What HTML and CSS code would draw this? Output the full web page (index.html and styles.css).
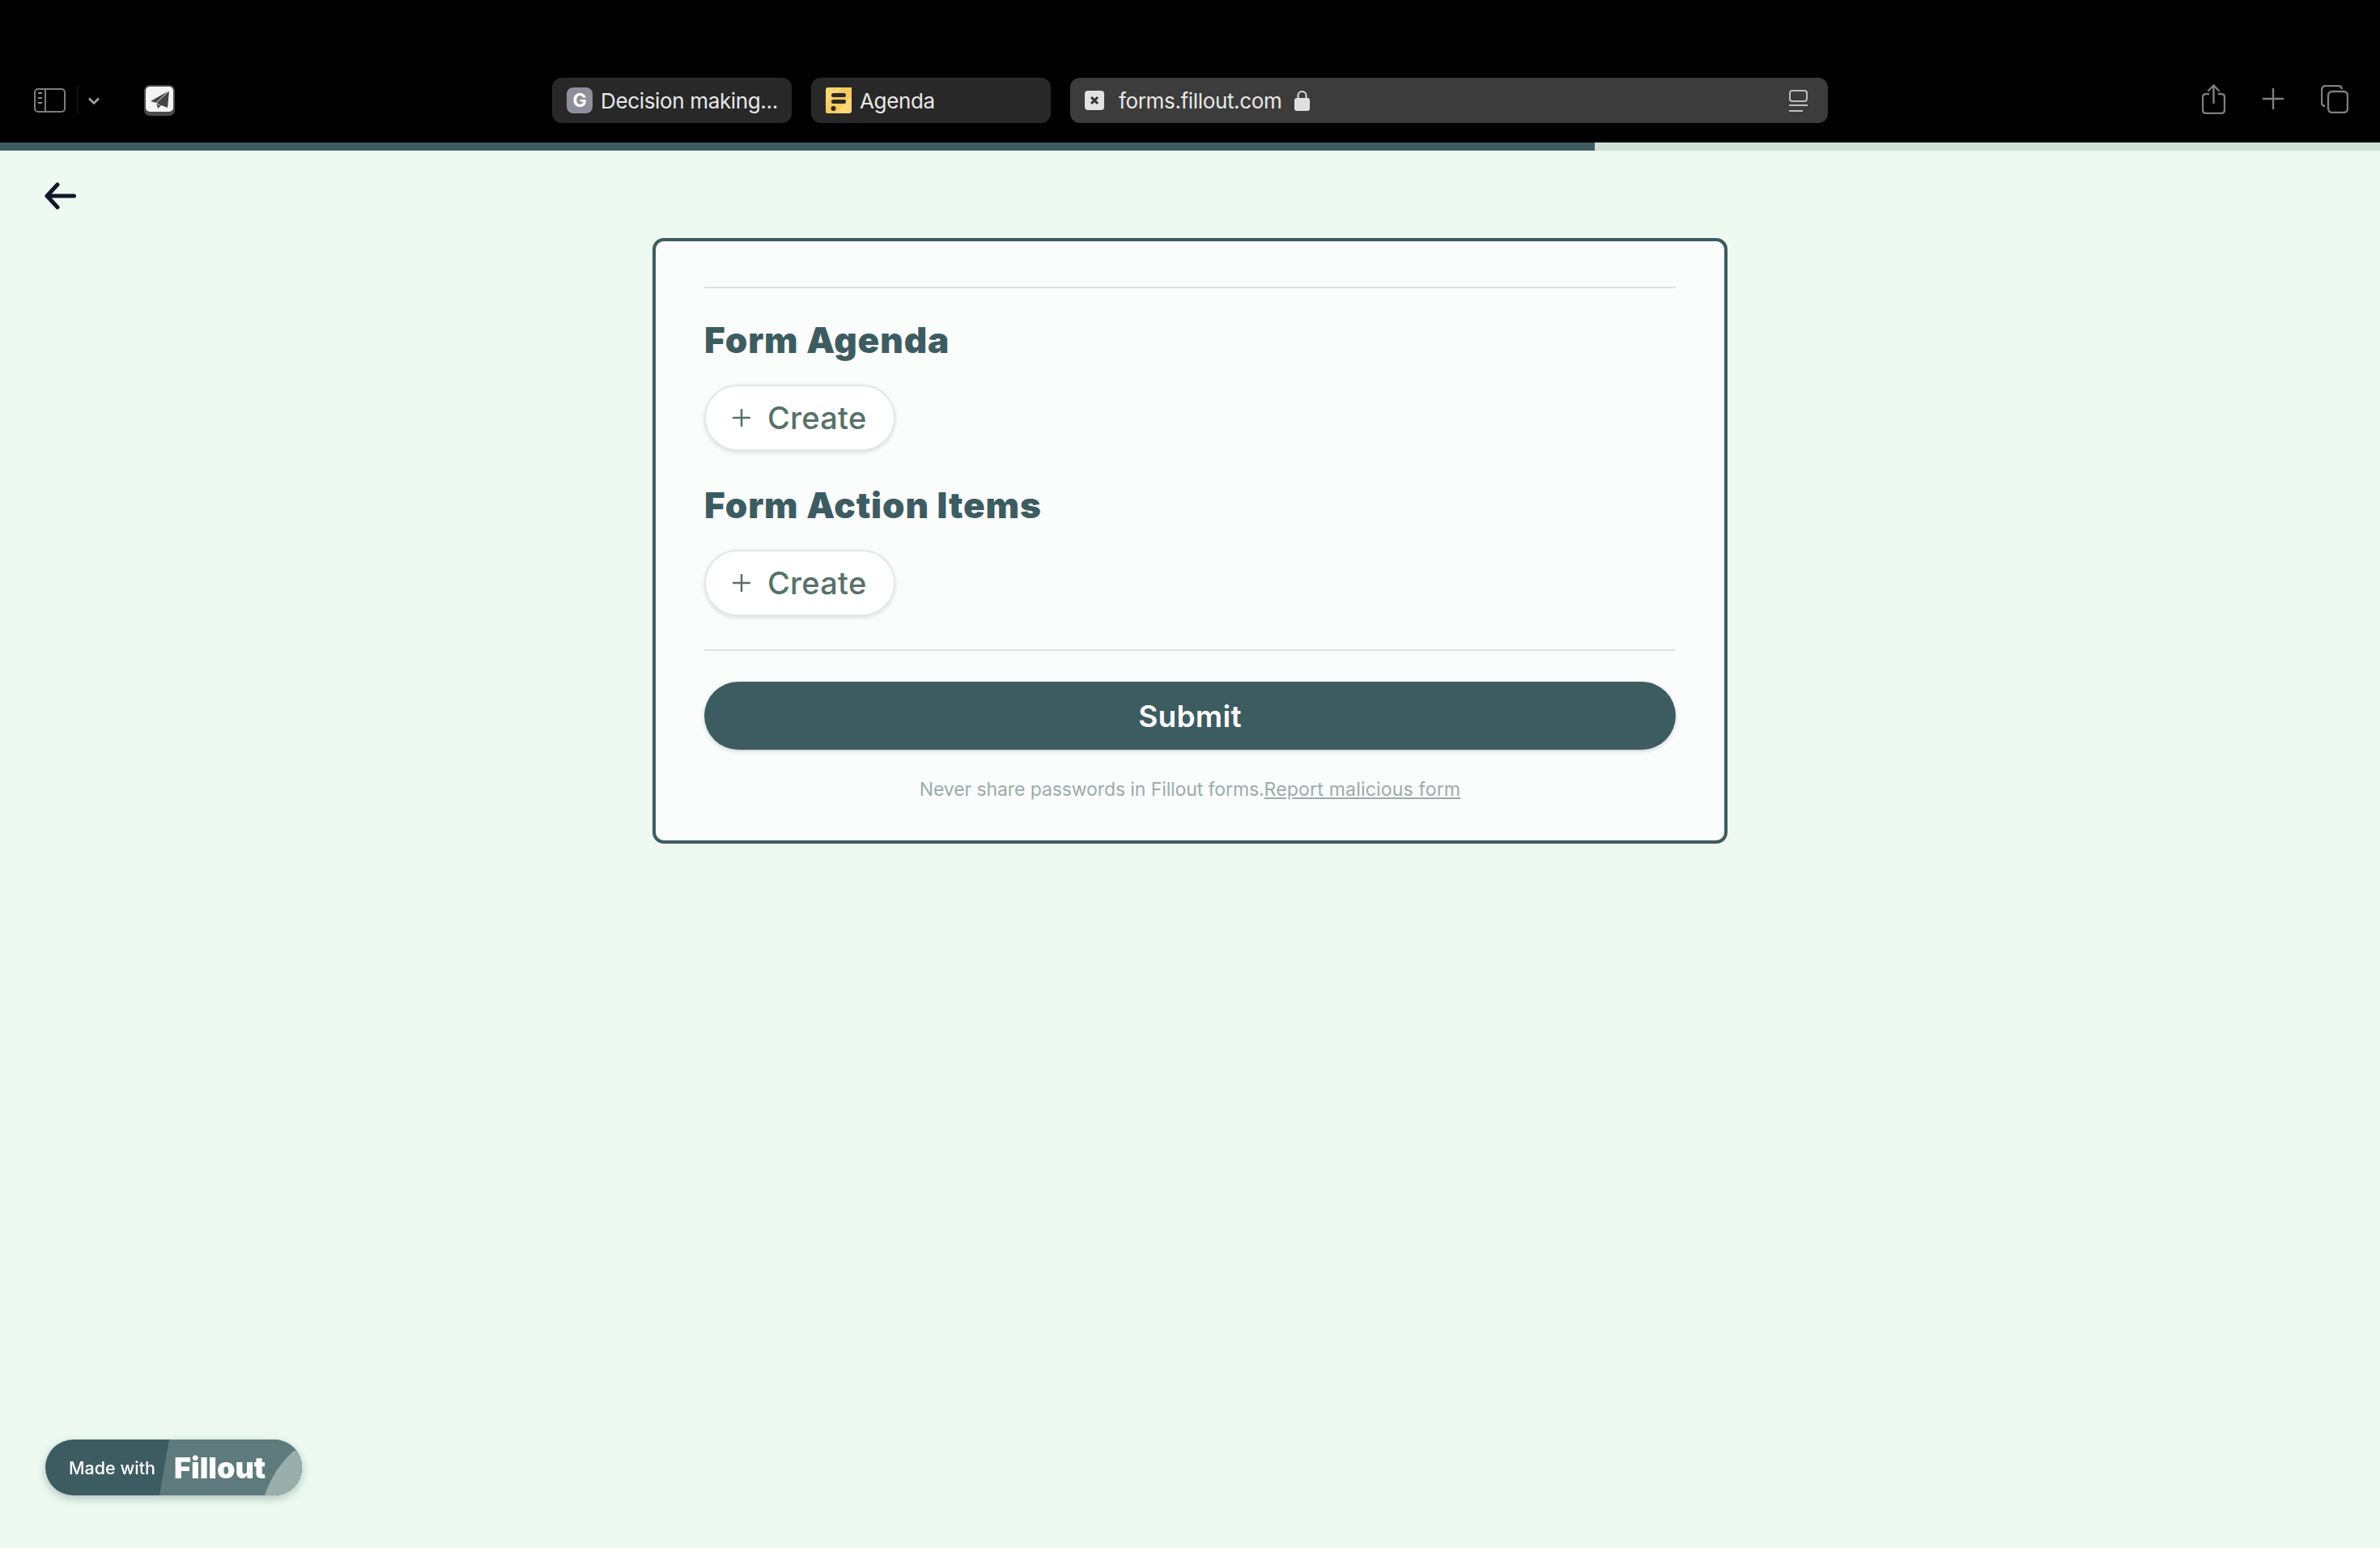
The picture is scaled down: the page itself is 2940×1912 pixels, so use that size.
FILE: index.html
```html
<!DOCTYPE html>
<html lang="en">
<head>
  <meta charset="UTF-8">
  <meta name="viewport" content="width=device-width, initial-scale=1.0">
  <title>Agenda</title>
  <link rel="stylesheet" href="styles.css">
</head>
<body>
  <header class="toolbar">
    <div class="toolbar-left">
      <svg class="icon-sidebar" width="39" height="30" viewBox="0 0 39 30" fill="none" stroke="#7c7c7c" stroke-width="2">
        <rect x="1" y="1" width="37" height="28" rx="4"/>
        <path d="M14 1v28"/>
        <path d="M5 6h5M5 12h5M5 18h5" stroke="#8e8e8e"/>
      </svg>
      <span class="toolbar-divider"></span>
      <svg class="icon-chevron" width="14" height="9" viewBox="0 0 14 9" fill="none" stroke="#a0a0a0" stroke-width="2.6">
        <path d="M1 1.5l6 6 6-6"/>
      </svg>
      <svg class="icon-app" width="38" height="38" viewBox="0 0 38 38">
        <rect width="38" height="38" rx="7" fill="#4b4b4b"/>
        <rect x="2" y="2" width="34" height="31" rx="5" fill="#f4f4f4"/>
        <path d="M31 7 L8 20 L15 22 L17 29 L21 25 L29 28 Z" fill="#444"/>
        <path d="M31 7 L15 22 L19 25" fill="none" stroke="#f4f4f4" stroke-width="1"/>
      </svg>
    </div>

    <div class="tabs">
      <div class="tab">
        <span class="favicon favicon-g">G</span>
        <span>Decision making...</span>
      </div>
      <div class="tab">
        <svg class="favicon" width="32" height="32" viewBox="0 0 32 32">
          <rect width="32" height="32" rx="3" fill="#fbd773"/>
          <path d="M0 20 L20 0 H32 V10 L12 32 H3 Q0 32 0 29 Z" fill="#f8cb5f"/>
          <rect x="7" y="7" width="18" height="5" rx="2.5" fill="#2b2a27"/>
          <rect x="7" y="15" width="18" height="5" rx="2.5" fill="#2b2a27"/>
          <circle cx="9.5" cy="26" r="3" fill="#2b2a27"/>
        </svg>
        <span>Agenda</span>
      </div>
      <div class="tab tab-active">
        <svg class="favicon-x" width="24" height="24" viewBox="0 0 24 24">
          <rect width="24" height="24" rx="4" fill="#e2e2e2"/>
          <path d="M8 8l8 8M16 8l-8 8" stroke="#333" stroke-width="3"/>
        </svg>
        <span class="address">forms.fillout.com</span>
        <svg class="icon-lock" width="19" height="26" viewBox="0 0 19 26">
          <path d="M4.5 11V7a5 5 0 0 1 10 0v4" fill="none" stroke="#e0e0e0" stroke-width="2"/>
          <rect y="10" width="19" height="16" rx="3" fill="#e0e0e0"/>
        </svg>
        <svg class="icon-reader" width="23" height="27" viewBox="0 0 23 27" fill="none" stroke="#bdbdbd" stroke-width="2">
          <rect x="1" y="1" width="21" height="13" rx="3"/>
          <path d="M0 19h23M0 26h17"/>
        </svg>
      </div>
    </div>

    <div class="toolbar-right">
      <svg width="29" height="37" viewBox="0 0 29 37" fill="none" stroke="#7f7f7f" stroke-width="2.4">
        <path d="M9 12H5a4 4 0 0 0-4 4v16a4 4 0 0 0 4 4h19a4 4 0 0 0 4-4V16a4 4 0 0 0-4-4h-4"/>
        <path d="M14.5 24V2M7.500 8.500l7-7 7 7"/>
      </svg>
      <svg width="28" height="28" viewBox="0 0 28 28" fill="none" stroke="#7f7f7f" stroke-width="2.400">
        <path d="M14 1v26M1 14h26"/>
      </svg>
      <svg width="34" height="35" viewBox="0 0 34 35" fill="none" stroke="#7f7f7f" stroke-width="2.400">
        <path d="M5 26a4 4 0 0 1-4-4V6a5 5 0 0 1 5-5h15a5 5 0 0 1 5 4"/>
        <rect x="9" y="8" width="24" height="26" rx="5"/>
      </svg>
    </div>
  </header>

  <div class="progress"><div class="progress-fill"></div></div>

  <main class="page">
    <svg class="back" width="39" height="34" viewBox="0 0 39 34" fill="none" stroke="#111827" stroke-width="5" stroke-linecap="round" stroke-linejoin="round">
      <path d="M36.500 17H3M16 3L3 17l13 14"/>
    </svg>

    <section class="card">
      <hr class="rule">
      <h2 class="section-title">Form Agenda</h2>
      <button class="create-button">
        <svg width="22" height="22" viewBox="0 0 22 22" fill="none" stroke="#56716a" stroke-width="2.500" stroke-linecap="round">
          <path d="M11 1v20M1 11h20"/>
        </svg>
        Create
      </button>
      <h2 class="section-title second">Form Action Items</h2>
      <button class="create-button">
        <svg width="22" height="22" viewBox="0 0 22 22" fill="none" stroke="#56716a" stroke-width="2.500" stroke-linecap="round">
          <path d="M11 1v20M1 11h20"/>
        </svg>
        Create
      </button>
      <hr class="rule rule-bottom">
      <button class="submit-button">Submit</button>
      <p class="notice">Never share passwords in Fillout forms.<a href="#">Report malicious form</a></p>
    </section>
  </main>

  <div class="badge">
    <svg class="badge-bg" width="317" height="69" viewBox="0 0 317 69">
      <path d="M153 0 L141 69 H317 V0 Z" fill="#5f7a7c"/>
      <path d="M307 14 Q282 36 271 69 H317 V14 Z" fill="#9aafac"/>
    </svg>
    <span class="badge-made">Made with</span>
    <span class="badge-name">Fillout</span>
  </div>
</body>
</html>
```

FILE: styles.css
```css
html, body {
  margin: 0;
  height: 100%;
}
body {
  font-family: Inter, "Liberation Sans", sans-serif;
  background-color: #eefaf1;
  color: #3d5c61;
  overflow: hidden;
}

/* browser chrome */
.toolbar {
  display: flex;
  height: 176px;
  box-sizing: border-box;
  padding-top: 96px;
  background-color: #000;
}
.toolbar-left {
  display: flex;
  align-items: center;
  width: 682px;
  height: 56px;
  padding-left: 42px;
  box-sizing: border-box;
}
.toolbar-divider {
  width: 1px;
  height: 36px;
  margin: 0 14px;
  background-color: #1c1c1c;
}
.icon-chevron {
  margin-left: -1px;
}
.icon-app {
  margin-left: 55px;
}
.tabs {
  display: flex;
  gap: 24px;
  width: 1576px;
}
.tab {
  display: flex;
  align-items: center;
  width: 296px;
  height: 56px;
  box-sizing: border-box;
  padding-left: 18px;
  border-radius: 12px;
  background-color: #282828;
  color: #e8e8e8;
  font-size: 26px;
  letter-spacing: -0.35px;
  white-space: nowrap;
}
.tab .favicon {
  flex: none;
  margin-right: 10px;
}
.favicon-g {
  display: flex;
  align-items: center;
  justify-content: center;
  width: 32px;
  height: 32px;
  border-radius: 8px;
  background-color: #8f8f9c;
  color: #fff;
  font-size: 23px;
  font-weight: 700;
}
.tab-active {
  width: 936px;
  padding-left: 18px;
  padding-right: 25px;
  background-color: #3c3c3c;
}
.address {
  margin-left: 18px;
}
.icon-lock {
  margin-left: 16px;
}
.icon-reader {
  margin-left: auto;
}
.toolbar-right {
  display: flex;
  align-items: center;
  gap: 45px;
  height: 56px;
  margin-left: 462px;
  margin-top: -2px;
}

.progress {
  height: 10px;
  background-color: #d1e0d7;
}
.progress-fill {
  width: 1970px;
  height: 100%;
  background-color: #3d5c61;
}

/* form */
.back {
  display: block;
  margin: 39px 0 35px 55px;
}
.card {
  width: 1328px;
  height: 748px;
  box-sizing: border-box;
  margin: 0 auto;
  padding: 56px 60px 0;
  border: 4px solid #3d5c61;
  border-radius: 14px;
  background-color: #fbfdfc;
}
.rule {
  height: 2px;
  margin: 0;
  border: none;
  background-color: #dde3e1;
}
.rule-bottom {
  margin-top: 41px;
}
.section-title {
  height: 60px;
  margin: 34px 0 25px;
  font-size: 44px;
  font-weight: 900;
  line-height: 60px;
  letter-spacing: 0.9px;
}
.section-title.second {
  margin-top: 37px;
}
.create-button {
  display: flex;
  align-items: center;
  gap: 21px;
  width: 236px;
  height: 82px;
  padding: 0 0 0 33px;
  box-sizing: border-box;
  border: 2px solid #e2e8e6;
  border-radius: 41px;
  background-color: #fff;
  box-shadow: 0 2px 5px rgba(61, 92, 97, 0.18);
  color: #56716a;
  font-family: inherit;
  font-size: 38px;
  font-weight: 500;
  letter-spacing: 0.25px;
}
.submit-button {
  display: block;
  width: 100%;
  height: 84px;
  margin-top: 38px;
  border: none;
  border-radius: 42px;
  background-color: #3d5c61;
  box-shadow: 0 2px 5px rgba(61, 92, 97, 0.25);
  color: #fff;
  font-family: inherit;
  font-size: 37px;
  font-weight: 600;
  letter-spacing: 0.3px;
}
.notice {
  margin: 32px 0 0;
  color: #9aabab;
  font-size: 23px;
  line-height: 34px;
  letter-spacing: -0.1px;
  text-align: center;
}
.notice a {
  color: inherit;
  letter-spacing: 0.2px;
}

/* made with badge */
.badge {
  position: fixed;
  left: 56px;
  bottom: 65px;
  display: flex;
  align-items: center;
  width: 317px;
  height: 69px;
  box-sizing: border-box;
  overflow: hidden;
  border-radius: 35px;
  background-color: #3d5c61;
  box-shadow: 0 4px 12px rgba(61, 92, 97, 0.35);
  color: #fff;
}
.badge-bg {
  position: absolute;
  left: 0;
  top: 0;
}
.badge-made {
  position: relative;
  margin-left: 29px;
  font-size: 21.5px;
  font-weight: 500;
}
.badge-name {
  position: relative;
  margin-left: 23px;
  font-size: 36px;
  font-weight: 900;
}
```
